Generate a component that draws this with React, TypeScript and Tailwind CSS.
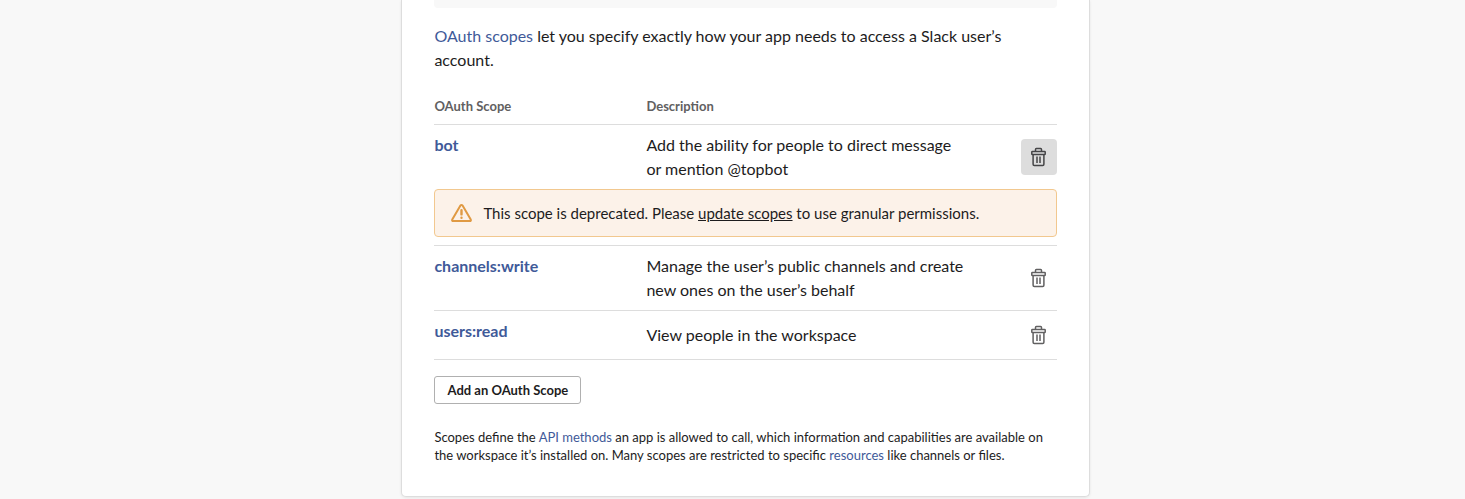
import React from 'react';

function Trash({ active = false }: { active?: boolean }) {
  return (
    <button aria-label="Remove scope" className={active ? 'flex size-9 items-center justify-center rounded-[4px] bg-[#dddddd] text-[#454547]' : 'flex size-9 items-center justify-center rounded-[4px] text-[#616061]'}>
      <svg className="-ml-[2.8px]" width="18" height="20" viewBox="0 0 18 20" fill="none" stroke="currentColor" strokeWidth="1.5" strokeLinejoin="round">
        <path d="M6.5 4.5V2.4q0-.9.9-.9h4.2q.9 0 .9.9v2.1" />
        <rect x="2.8" y="4.5" width="13.4" height="3" rx=".6" />
        <path d="M4.1 7.7v9.6q0 1.2 1.2 1.2h8.4q1.2 0 1.2-1.2V7.7M8 9.5v6.5M11 9.5v6.5" />
      </svg>
    </button>
  );
}

export default function App() {
  return (
    <div className="flex h-[499px] justify-center overflow-hidden bg-[#f8f8f8] pl-[26.8px] font-[Lato,sans-serif] text-base leading-6 text-[#1d1c1d]">
      <main className="h-[497px] w-[689px] shrink-0 rounded-b-[5px] border border-t-0 border-[#dddddd] bg-white px-8 shadow-[0_1px_3px_rgba(0,0,0,0.08)]">
        <div className="h-2 rounded-b-[4px] bg-[#f8f8f8]" />
        <p className="mt-4"><a className="text-[#3f5a99]">OAuth scopes</a> let you specify exactly how your app needs to access a Slack user’s account.</p>
        <div className="mt-6 flex h-[29px] border-b border-[#dddddd] text-[13px] leading-5 font-bold text-[#616061]"><div className="w-[212px]">OAuth Scope</div><div>Description</div></div>
        <section className="h-[121px] border-b border-[#dddddd] pt-2">
          <div className="flex h-14"><b className="w-[212px] text-[#3f5a99]">bot</b><p className="w-[320px]">Add the ability for people to direct message or mention @topbot</p><div className="ml-auto pt-1.5"><Trash active /></div></div>
          <div className="flex h-12 items-center rounded-[4px] border border-[#f2c88f] bg-[#fcf2e9] pl-4 text-[15px]">
            <svg width="21" height="20" viewBox="0 0 21 20" fill="none" stroke="#e09a43" strokeWidth="2" strokeLinecap="round" strokeLinejoin="round">
              <path d="M9.3 2.7 1.4 16.2Q.5 18.1 2.5 18.1h16q2 0 1.1-1.9L11.7 2.7q-1.2-1.5-2.4 0Z" />
              <path d="M10.5 7.2v4.2M10.5 14.7v.1" strokeWidth="2.4" />
            </svg>
            <span className="ml-[11px]">This scope is deprecated. Please <u>update scopes</u> to use granular permissions.</span>
          </div>
        </section>
        <section className="flex h-[65px] border-b border-[#dddddd] pt-2"><b className="w-[212px] text-[#3f5a99]">channels:write</b><p className="w-[320px]">Manage the user’s public channels and create new ones on the user’s behalf</p><div className="ml-auto pt-1.5"><Trash /></div></section>
        <section className="flex h-[49px] border-b border-[#dddddd] pt-2"><b className="w-[212px] text-[#3f5a99]">users:read</b><p className="pt-1">View people in the workspace</p><div className="-mt-0.5 ml-auto"><Trash /></div></section>
        <button className="mt-4 h-7 w-[147px] rounded-[3px] border border-[#b0b0b0] text-[13px] leading-5 font-bold">Add an OAuth Scope</button>
        <p className="mt-6 text-[13px] leading-[18px]">Scopes define the <a className="text-[#3f5a99]">API methods</a> an app is allowed to call, which information and capabilities are available on the workspace it’s installed on. Many scopes are restricted to specific <a className="text-[#3f5a99]">resources</a> like channels or files.</p>
      </main>
    </div>
  );
}
